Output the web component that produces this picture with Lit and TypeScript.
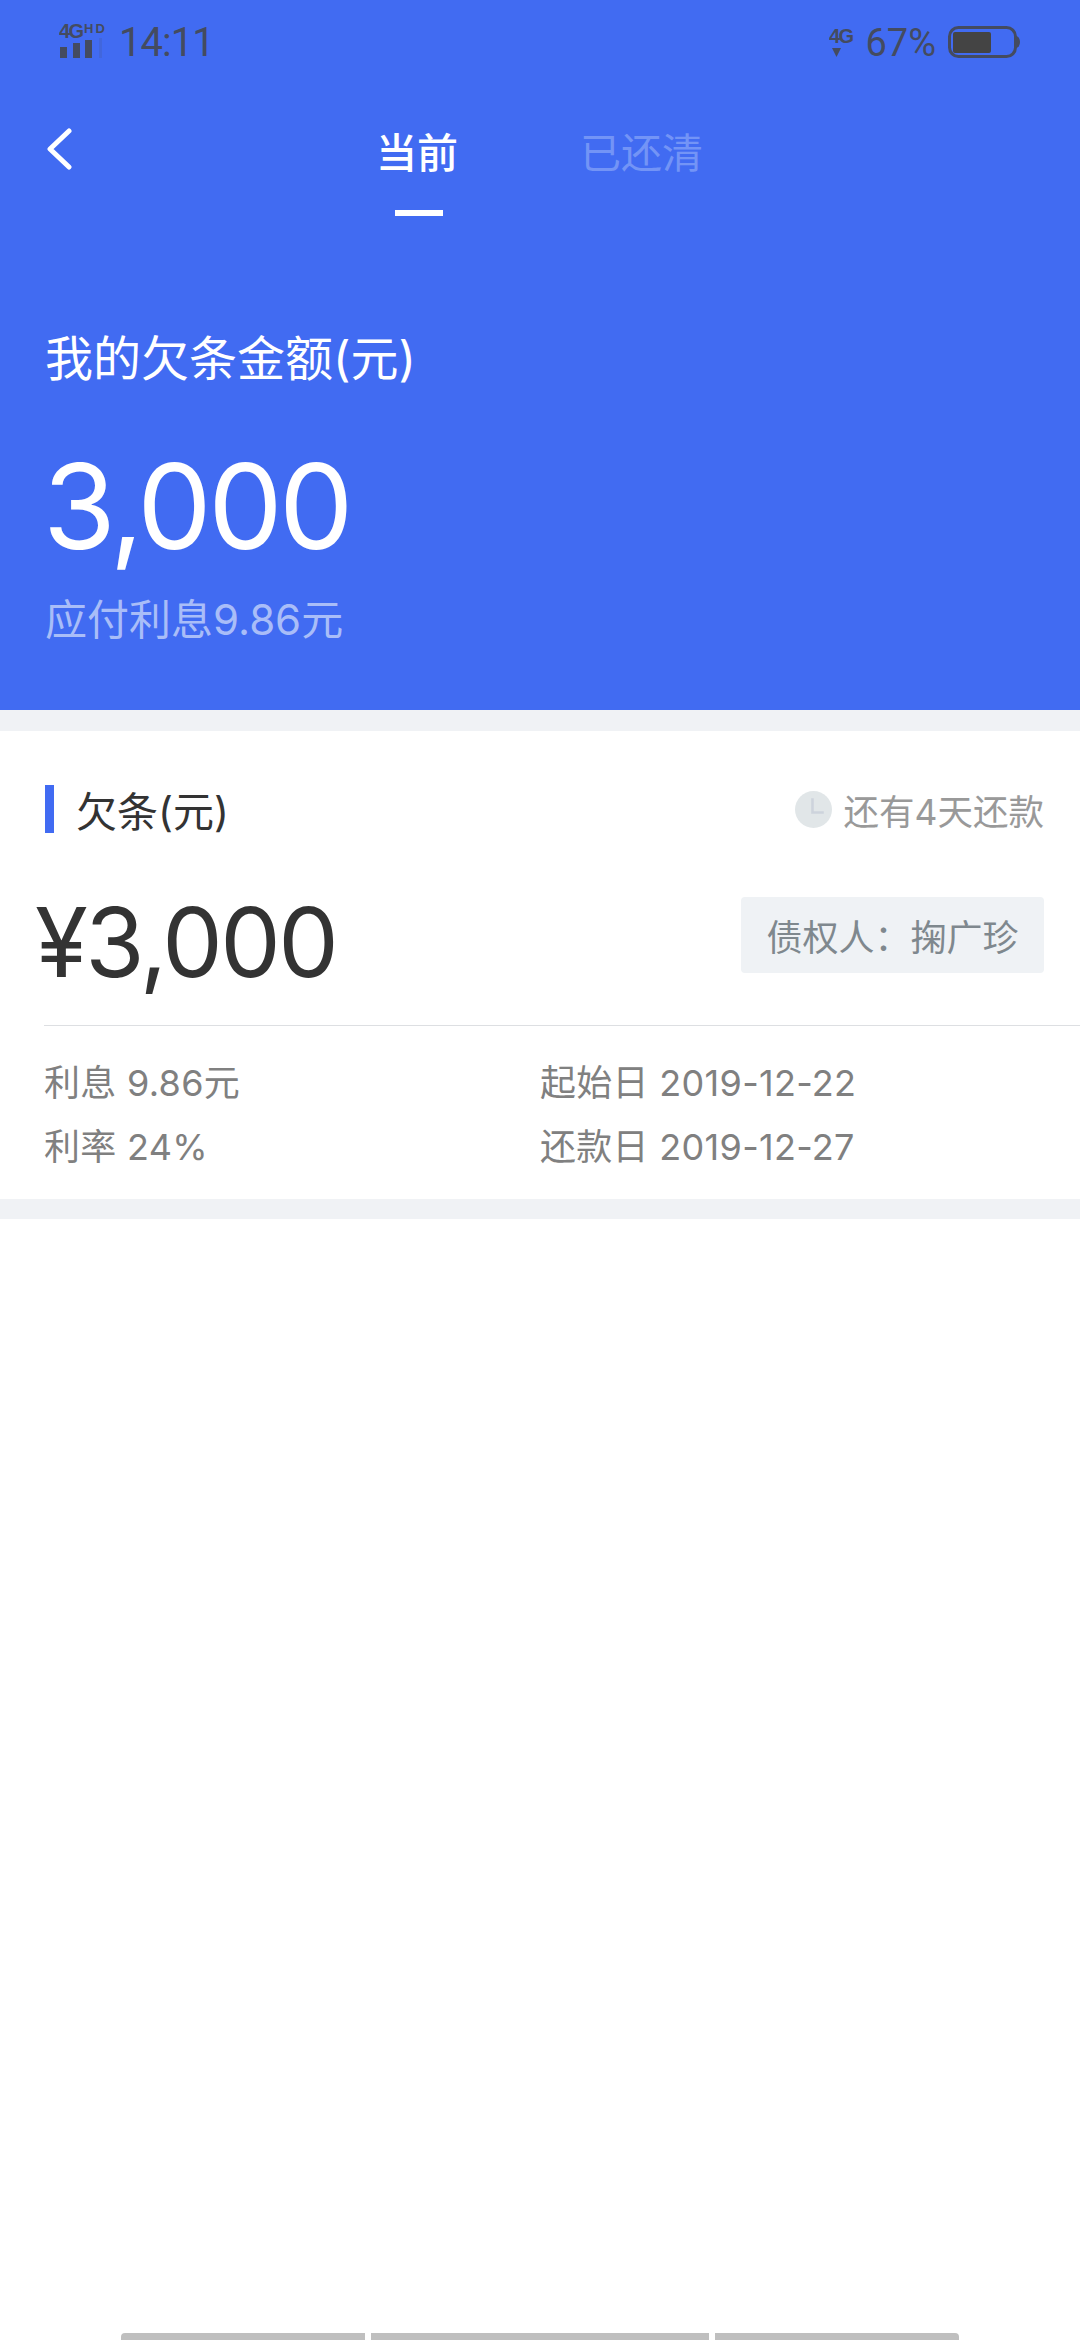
import { LitElement, html, css } from "lit";
import { customElement } from "lit/decorators.js";

@customElement("app-root")
export class AppRoot extends LitElement {
  static styles = css`
    :host { display: flex; flex-direction: column; width: 1080px; height: 2340px; background: #fff; font-family: Inter, "Noto Sans CJK SC", sans-serif; overflow: hidden; }
    .hero { height: 710px; background: #416bf2; display: flex; flex-direction: column; flex: none; box-sizing: border-box; }
    .status { height: 84px; display: flex; align-items: center; padding: 0 60px 0 59px; color: #444b60; flex: none; }
    .time { font-family: Roboto, sans-serif; font-size: 40px; margin-left: 12px; line-height: 84px; letter-spacing: -1px; padding-top: 2px; }
    .spacer { flex: 1; }
    .pct { font-family: Roboto, sans-serif; font-size: 38px; margin: 0 12px 0 11px; padding-top: 1px; }
    .nav { display: flex; position: relative; height: 140px; padding-left: 47px; box-sizing: border-box; }
    .back { margin-top: 44px; width: 26px; height: 42px; flex: none; }
    .tabs { display: flex; margin-left: 303px; }
    .tab { font-size: 41px; line-height: 44px; margin-top: 47px; color: #7394f6; display: flex; flex-direction: column; align-items: center; }
    .tab.on { color: #fff; font-weight: 500; width: 82px; margin-right: 122px; }
    .ind { width: 48px; height: 6px; background: #fff; margin-top: 35px; margin-left: 3px; flex: none; }
    .hero-title { font-size: 48px; line-height: 60px; color: #fff; margin: 105px 0 0 45px; }
    .hero-amt { font-size: 118px; line-height: 130px; letter-spacing: -3.5px; color: #fff; margin: 52px 0 0 43px; }
    .hero-sub { font-size: 42px; line-height: 50px; color: #a9bdf8; margin: 24px 0 0 45px; }
    .gap { background: #f0f2f5; height: 21px; flex: none; }
    .gap2 { height: 20px; }
    .card { height: 468px; flex: none; box-sizing: border-box; padding-top: 54px; display: flex; flex-direction: column; }
    .row1 { display: flex; align-items: center; padding: 0 36px 0 45px; height: 48px; }
    .bar { width: 9px; height: 48px; background: #416bf2; }
    .label { font-size: 41px; color: #333; margin-left: 22px; }
    .clock { width: 37px; height: 37px; margin-right: 12px; }
    .due { font-size: 35.500px; color: #999; }
    .row2 { display: flex; align-items: center; justify-content: space-between; padding: 0 36px 0 36px; margin-top: 64px; height: 76px; }
    .big { font-size: 96px; color: #333; line-height: 76px; letter-spacing: -2.600px; margin-top: 14px; margin-left: -1px; }
    .chip { height: 76px; width: 303px; box-sizing: border-box; background: #eff2f5; border-radius: 4px; font-size: 36px; color: #7f888e; display: flex; align-items: center; justify-content: center; white-space: pre; }
    .line { height: 1px; background: #dddfe2; margin: 52px 0 0 44px; }
    .grid { display: grid; grid-template-columns: 496px 1fr; grid-auto-rows: 64px; padding: 25px 0 0 44px; font-size: 36px; letter-spacing: 0.3px; color: #808080; line-height: 64px; }
    .home { margin-top: auto; height: 7px; display: flex; gap: 6px; padding-left: 121px; }
    .home div { background: #bfbfbf; height: 7px; }
    .home .a { width: 244px; border-radius: 4px 0 0 0; }
    .home .b { width: 338px; }
    .home .c { width: 244px; border-radius: 0 4px 0 0; }
  `;

  render() {
    return html`
      <div class="hero">
        <div class="status">
          <svg width="48" height="48" viewBox="0 -4 48 48" fill="#444b60">
            <text x="0" y="15.500" font-family="Liberation Sans" font-weight="700" font-size="20" textLength="25">4G</text>
            <text x="25" y="11" font-family="Liberation Sans" font-weight="700" font-size="13" textLength="21">HD</text>
            <rect x="1" y="25" width="7" height="11"/>
            <rect x="14" y="21" width="7" height="15"/>
            <rect x="26" y="18" width="7" height="18"/>
            <rect x="40" y="16" width="3" height="20" opacity=".15"/>
          </svg>
          <span class="time">14:11</span>
          <span class="spacer"></span>
          <svg width="25" height="36" viewBox="0 0 25 36" fill="#444b60">
            <text x="0" y="19" font-family="Liberation Sans" font-weight="700" font-size="20" textLength="25">4G</text>
            <path d="M3 24h9l-4.500 9z"/>
          </svg>
          <span class="pct">67%</span>
          <svg width="72" height="32" viewBox="0 0 72 32">
            <rect x="1.500" y="1.500" width="66" height="29" rx="9" fill="none" stroke="#444b60" stroke-width="3"/>
            <rect x="5" y="6" width="38" height="21" rx="2" fill="#444444"/>
            <path d="M68 10a4 6 0 0 1 4 6a4 6 0 0 1-4 6z" fill="#444b60"/>
          </svg>
        </div>
        <div class="nav">
          <svg class="back" viewBox="0 0 26 42" fill="none" stroke="#fff" stroke-width="5" stroke-linecap="round" stroke-linejoin="round">
            <path d="M22 3 3 21l19 18"/>
          </svg>
          <div class="tabs">
            <div class="tab on">当前<div class="ind"></div></div>
            <div class="tab">已还清</div>
          </div>
        </div>
        <div class="hero-title">我的欠条金额(元)</div>
        <div class="hero-amt">3,000</div>
        <div class="hero-sub">应付利息9.86元</div>
      </div>
      <div class="gap"></div>
      <div class="card">
        <div class="row1">
          <div class="bar"></div>
          <div class="label">欠条(元)</div>
          <span class="spacer"></span>
          <svg class="clock" viewBox="0 0 36 36">
            <circle cx="18" cy="18" r="18" fill="#e1e6e8"/>
            <path d="M17 7v14h11" fill="none" stroke="#cdd3dc" stroke-width="2.500"/>
          </svg>
          <span class="due">还有4天还款</span>
        </div>
        <div class="row2">
          <div class="big">¥3,000</div>
          <div class="chip">债权人：掬广珍</div>
        </div>
        <div class="line"></div>
        <div class="grid">
          <div>利息 9.86元</div><div>起始日 2019-12-22</div>
          <div>利率 24%</div><div>还款日 2019-12-27</div>
        </div>
      </div>
      <div class="gap gap2"></div>
      <div class="home"><div class="a"></div><div class="b"></div><div class="c"></div></div>
    `;
  }
}
